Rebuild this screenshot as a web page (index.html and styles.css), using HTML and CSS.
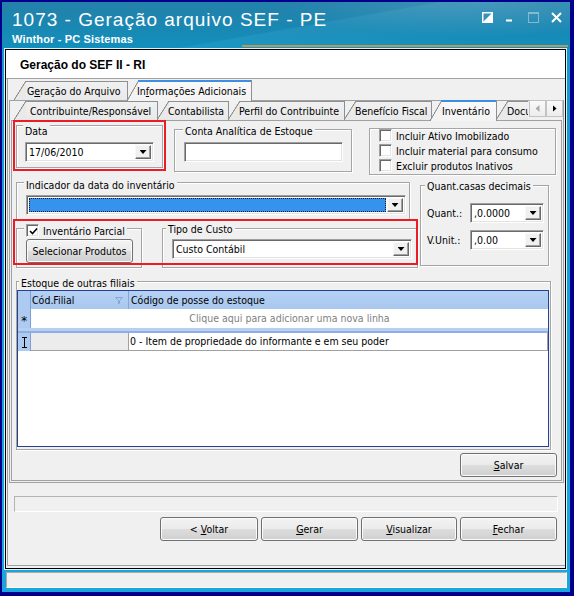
FILE: index.html
```html
<!DOCTYPE html>
<html lang="pt-BR">
<head>
<meta charset="utf-8">
<title>1073 - Geração arquivo SEF - PE</title>
<link rel="stylesheet" href="styles.css">
</head>
<body>
<div class="window">
  <div class="titlebar">
    <div class="title-text">
      <div class="title">1073 - Geração arquivo SEF - PE</div>
      <div class="subtitle">Winthor - PC Sistemas</div>
    </div>
    <div class="caption-btns">
      <svg class="cb" width="11" height="11" viewBox="0 0 11 11"><rect x="0.75" y="0.75" width="9.5" height="9.5" fill="none" stroke="#fff" stroke-width="1.5"/><path d="M10.5 0.5 V10.5 H0.5 Z" fill="#fff"/></svg>
      <svg class="cb" width="11" height="11" viewBox="0 0 11 11"><rect x="1" y="7.5" width="6" height="2" fill="#fff"/></svg>
      <svg class="cb" width="11" height="11" viewBox="0 0 11 11"><rect x="0.5" y="0.5" width="10" height="10" fill="none" stroke="#86b9cf"/><rect x="0" y="0" width="11" height="2" fill="#86b9cf"/></svg>
      <svg class="cb" width="11" height="11" viewBox="0 0 11 11"><path d="M1 1 L10 10 M10 1 L1 10" stroke="#fff" stroke-width="2"/></svg>
    </div>
  </div>

  <div class="client">
    <div class="form-header">Geração do SEF II - RI</div>
    <div class="workarea">
      <div class="frame">
        <div class="tabs tabs-outer">
          <span class="tab o1">G<u>e</u>ração do Arquivo</span>
          <span class="tab active o2">In<u>f</u>ormações Adicionais</span>
        </div>

        <div class="outer-page">
          <div class="tabs tabs-inner">
            <span class="tab i1">Contribuinte/Responsável</span>
            <span class="tab i2">Contabilista</span>
            <span class="tab i3">Perfil do Contribuinte</span>
            <span class="tab i4">Benefício Fiscal</span>
            <span class="tab active i5">Inventário</span>
            <span class="tab clipped i6"><span class="tab-label">Documentos</span></span>
            <span class="arr arr-left"><span class="tri-left"></span></span>
            <span class="arr arr-right"><span class="tri-right"></span></span>
          </div>

          <div class="inner-page">
            <div class="row-a">
              <div class="grp g-data">
                <span class="cap cap-data">Data</span>
                <div class="combo c-data"><span class="val">17/06/2010</span><span class="dd"><i class="tri-down"></i></span></div>
              </div>
              <div class="grp g-conta">
                <span class="cap cap-conta">Conta Analítica de Estoque</span>
                <div class="edit e-conta"></div>
              </div>
              <div class="grp g-checks">
                <label class="chk-row first"><span class="chk"></span><span class="chk-label">Incluir Ativo Imobilizado</span></label>
                <label class="chk-row"><span class="chk"></span><span class="chk-label">Incluir material para consumo</span></label>
                <label class="chk-row"><span class="chk"></span><span class="chk-label">Excluir produtos Inativos</span></label>
              </div>
            </div>

            <div class="row-b">
              <div class="col-left">
                <div class="grp g-ind">
                  <span class="cap cap-ind">Indicador da data do inventário</span>
                  <div class="combo c-ind"><span class="val selected"></span><span class="dd"><i class="tri-down"></i></span></div>
                </div>
                <div class="row-inv">
                  <div class="grp g-inv">
                    <span class="cap cap-inv">
                      <span class="chk checked"><svg width="9" height="9" viewBox="0 0 9 9"><path d="M1 4 L3.5 6.5 L8 1.5" fill="none" stroke="#000" stroke-width="1.6"/></svg></span>
                      <span class="chk-label">Inventário Parcial</span>
                    </span>
                    <button class="btn b-sel" type="button">Selecionar Produtos</button>
                  </div>
                  <div class="grp g-custo">
                    <span class="cap cap-custo">Tipo de Custo</span>
                    <div class="combo c-custo"><span class="val">Custo Contábil</span><span class="dd"><i class="tri-down"></i></span></div>
                  </div>
                </div>
              </div>
              <div class="grp g-quant">
                <span class="cap cap-quant">Quant.casas decimais</span>
                <div class="q-row first"><span class="q-label">Quant.:</span><div class="combo c-q"><span class="val">,0.0000</span><span class="dd"><i class="tri-down"></i></span></div></div>
                <div class="q-row"><span class="q-label">V.Unit.:</span><div class="combo c-q"><span class="val">,0.00</span><span class="dd"><i class="tri-down"></i></span></div></div>
              </div>
            </div>

            <div class="grp g-estoque">
              <span class="cap cap-estoque">Estoque de outras filiais</span>
              <div class="grid">
                <div class="g-head">
                  <div class="ind"></div>
                  <div class="hc c1">Cód.Filial<svg class="funnel" width="8" height="7" viewBox="0 0 8 7"><path d="M0.5 0.5 H7.5 L4.5 3.5 V6.5 H3.5 V3.5 Z" fill="none" stroke="#86a6da"/></svg></div>
                  <div class="hc c2">Código de posse do estoque</div>
                </div>
                <div class="g-new">
                  <div class="ind star">*</div>
                  <div class="newtext">Clique aqui para adicionar uma nova linha</div>
                </div>
                <div class="g-sep"></div>
                <div class="g-row">
                  <div class="ind"><svg width="5" height="11" viewBox="0 0 5 11"><path d="M0 0.5 H5 M2.5 0.5 V10.5 M0 10.5 H5" stroke="#000" fill="none"/></svg></div>
                  <div class="dc c1"></div>
                  <div class="dc c2">0 - Item de propriedade do informante e em seu poder</div>
                </div>
              </div>
            </div>

            <div class="row-save">
              <button class="btn b-wide" type="button"><span><u>S</u>alvar</span></button>
            </div>

            <div class="mark mark-data"></div>
            <div class="mark mark-custo"></div>
          </div>
        </div>

        <div class="progress"></div>

        <div class="actions">
          <button class="btn b-voltar" type="button">&lt; <u>V</u>oltar</button>
          <button class="btn b-gerar" type="button"><u>G</u>erar</button>
          <button class="btn b-vis" type="button"><u>V</u>isualizar</button>
          <button class="btn b-fechar" type="button"><u>F</u>echar</button>
        </div>
      </div>
    </div>
  </div>

  <div class="statusbar"></div>
</div>
</body>
</html>
```

FILE: styles.css
```css
* { box-sizing: border-box; }

html, body { margin: 0; padding: 0; }

body {
  width: 574px;
  height: 596px;
  padding: 2px 4px 4px 2px;
  overflow: hidden;
  background: #00008c;
  color: #000;
  font: 10.5px/12px "DejaVu Sans Condensed", "Liberation Sans", sans-serif;
}

/* ---------- window frame ---------- */
.window {
  width: 568px;
  height: 590px;
  display: flex;
  flex-direction: column;
  background: linear-gradient(180deg, #1596cf 0%, #1aa6dc 100%);
}

.titlebar {
  height: 47px;
  flex: none;
  display: flex;
  justify-content: space-between;
  padding: 6px 0 0 10px;
  color: #fff;
  background:
    linear-gradient(#b9975a, #b9975a) 240px 43px / 326px 2px no-repeat,
    radial-gradient(ellipse 300px 50px at 480px 0px, rgba(255,255,255,.13), rgba(255,255,255,0) 70%),
    linear-gradient(170deg, rgba(255,255,255,0) 52%, rgba(120,220,255,.10) 53%, rgba(255,255,255,0) 85%),
    linear-gradient(180deg, #2481aa 0%, #1a87b2 50%, #1190be 100%);
}

.title {
  font: 19px/24px "Liberation Sans", Arial, sans-serif;
  letter-spacing: 1px;
}

.subtitle {
  margin-top: 1px;
  font: bold 11px/13px "Liberation Sans", Arial, sans-serif;
  letter-spacing: .15px;
}

.caption-btns {
  display: flex;
  align-items: flex-start;
  gap: 12px;
  margin: 4px 8px 0 0;
}

.cb { display: block; }

.client {
  height: 520px;
  flex: none;
  margin: 0 4px 0 3px;
  border: 1px solid #000;
  box-shadow: 0 0 0 1px #dcf1fa;
  background: #f0f0f0;
  display: flex;
  flex-direction: column;
}

.statusbar {
  height: 16px;
  flex: none;
  margin: 3px 3px 0 4px;
  background: #f0f0f0;
  border: 1px solid;
  border-color: #a9a9a9 #fff #fff #a9a9a9;
}

/* ---------- form ---------- */
.form-header {
  height: 29px;
  flex: none;
  background: #fff;
  border-bottom: 1px solid #a0a0a0;
  padding: 2px 0 0 14px;
  font: bold 12px/26px "Liberation Sans", Arial, sans-serif;
}

.workarea {
  flex: 1;
  padding: 0 0 2px 1px;
}

.frame {
  height: 487px;
  border-left: 1px solid #a0a0a0;
  border-bottom: 1px solid #a0a0a0;
  display: flex;
  flex-direction: column;
}

/* ---------- tabs ---------- */
.tabs {
  display: flex;
  align-items: flex-end;
  position: relative;
  z-index: 2;
  flex: none;
}

.tabs-outer { height: 21px; padding-left: 7px; }
.tabs-inner { height: 20px; margin-top: -1px; padding-left: 4px; }

.tab {
  --bg: #e9e9e9;
  --ln: #8e8f90;
  position: relative;
  flex: none;
  height: 19px;
  display: flex;
  align-items: center;
  padding: 1px 0 0 11px;
  margin-left: -1px;
  white-space: nowrap;
  background:
    linear-gradient(var(--ln), var(--ln)) right top / 1px 100% no-repeat,
    linear-gradient(var(--ln), var(--ln)) 11px 0 / calc(100% - 11px) 1px no-repeat,
    linear-gradient(to top left, var(--bg) calc(50% - .7px), var(--ln) calc(50% - .3px), var(--ln) calc(50% + .3px), rgba(0,0,0,0) calc(50% + .7px)) left top / 12px 100% no-repeat,
    linear-gradient(#f1f1f1, var(--bg)) 11px 0 / calc(100% - 11px) 100% no-repeat;
}

.tab.active {
  --bg: #f3f3f3;
  z-index: 3;
  height: 21px;
  margin-bottom: -1px;
  background:
    linear-gradient(var(--ln), var(--ln)) right top / 1px 100% no-repeat,
    linear-gradient(#3d8fe3, #3d8fe3) 11px 0 / calc(100% - 11px) 2px no-repeat,
    linear-gradient(to top left, var(--bg) calc(50% - .7px), var(--ln) calc(50% - .3px), var(--ln) calc(50% + .3px), rgba(0,0,0,0) calc(50% + .7px)) left top / 12px 100% no-repeat,
    linear-gradient(#fafafa, var(--bg)) 11px 0 / calc(100% - 11px) 100% no-repeat;
}

.tab.clipped {
  background:
    linear-gradient(var(--ln), var(--ln)) 11px 0 / calc(100% - 11px) 1px no-repeat,
    linear-gradient(to top left, var(--bg) calc(50% - .7px), var(--ln) calc(50% - .3px), var(--ln) calc(50% + .3px), rgba(0,0,0,0) calc(50% + .7px)) left top / 12px 100% no-repeat,
    linear-gradient(#f1f1f1, var(--bg)) 11px 0 / calc(100% - 11px) 100% no-repeat;
}

.tab-label { display: block; overflow: hidden; width: 100%; }

.o1 { width: 114px; padding-left: 13px; }
.o2 { width: 125px; padding-left: 10px; }

.i1 { width: 144px; padding-left: 16px; margin-left: 0; }
.i2 { width: 72px; }
.i3 { width: 117px; }
.i4 { width: 88px; }
.i5 { width: 67px; margin-left: -2px; padding-left: 12px; }
.i6 { width: 32px; }

.arr {
  align-self: flex-start;
  width: 17px;
  height: 17px;
  border: 1px solid #c3c3c3;
  background: linear-gradient(#fafafa, #ececec);
  display: flex;
  align-items: center;
  justify-content: center;
}

.arr-left { margin-left: 1px; }

.tri-left, .tri-right {
  width: 4px;
  height: 7px;
}

.tri-left { background: #a9a9a9; clip-path: polygon(100% 0, 100% 100%, 0 50%); }
.tri-right { background: #000; clip-path: polygon(0 0, 0 100%, 100% 50%); }

/* ---------- pages ---------- */
.outer-page {
  flex: none;
  margin-left: 1px;
  width: 555px;
  height: 383px;
  border: 1px solid #a0a0a0;
  display: flex;
  flex-direction: column;
}

.inner-page {
  position: relative;
  flex: none;
  margin-left: 1px;
  width: 551px;
  height: 361px;
  border: 1px solid #a0a0a0;
  background: #f0f0f0;
}

/* ---------- group boxes ---------- */
.grp {
  flex: none;
  border: 1px solid #a5a5a5;
  box-shadow: inset 1px 1px 0 #fff, 1px 1px 0 #fff;
}

.cap {
  display: block;
  width: fit-content;
  height: 12px;
  padding: 0 2px;
  background: #f0f0f0;
  white-space: nowrap;
}

.row-a { display: flex; align-items: flex-start; }

.g-data   { width: 147px; height: 43px; margin: 4px 0 0 4px; }
.g-conta  { width: 178px; height: 43px; margin: 8px 0 0 11px; }
.g-checks { width: 187px; height: 47px; margin: 7px 0 0 17px; }

.cap-data  { margin: -1px 0 0 6px; }
.cap-conta { margin: -5px 0 0 8px; }

.c-data { width: 129px; margin: 5px 0 0 8px; }
.e-conta { width: 159px; margin: 5px 0 0 9px; }

.chk-row {
  display: flex;
  align-items: center;
  height: 15px;
}

.chk-row.first { margin-top: -1px; }

.chk-row .chk { margin-left: 9px; }

.chk-label { margin-left: 4px; white-space: nowrap; }

.chk {
  flex: none;
  width: 13px;
  height: 13px;
  border: 1px solid;
  border-color: #a0a0a0 #fff #fff #a0a0a0;
  box-shadow: inset 1px 1px 0 #696969, inset -1px -1px 0 #e3e3e3;
  background: #fff;
  display: flex;
  align-items: center;
  justify-content: center;
}

.chk svg { display: block; margin: 1px 0 0 1px; }

.row-b { display: flex; align-items: flex-start; margin-top: 7px; }

.col-left { width: 403px; margin-left: 4px; }

.g-ind { width: 394px; height: 38px; }
.cap-ind { margin: -4px 0 0 7px; }
.c-ind { width: 380px; height: 19px; margin: 4px 0 0 9px; }

.row-inv { display: flex; gap: 20px; margin-top: 8px; }

.g-inv { width: 126px; height: 40px; }
.cap-inv {
  display: flex;
  align-items: center;
  height: 13px;
  margin: -5px 0 0 7px;
}
.cap-inv .chk-label { margin-left: 4px; }

.b-sel { width: 107px; height: 23px; margin: 2px 0 0 9px; }

.g-custo { width: 256px; height: 40px; }
.cap-custo { margin: -6px 0 0 3px; }
.c-custo { width: 240px; height: 19px; margin: 4px 0 0 9px; }

.g-quant { width: 129px; height: 81px; margin: 3px 0 0 1px; }
.cap-quant { margin: -6px 0 0 4px; }

.q-row { display: flex; align-items: center; margin-top: 7px; }
.q-row.first { margin-top: 11px; }
.q-label { width: 43px; margin-left: 6px; white-space: nowrap; }
.c-q { width: 74px; height: 20px; }

.g-estoque { width: 535px; height: 169px; margin: 13px 0 0 4px; }
.cap-estoque { margin: -5px 0 0 2px; }

/* ---------- inputs ---------- */
.combo, .edit {
  flex: none;
  display: flex;
  height: 20px;
  padding: 2px;
  border: 1px solid;
  border-color: #a0a0a0 #fff #fff #a0a0a0;
  box-shadow: inset 1px 1px 0 #696969, inset -1px -1px 0 #e3e3e3;
  background: #fff;
}

.val {
  flex: 1;
  padding-left: 1px;
  line-height: 15px;
  white-space: nowrap;
  overflow: hidden;
}

.val.selected {
  background: #3592ee;
  outline: 1px dotted #1a1a1a;
  outline-offset: -1px;
  margin-right: 1px;
}

.dd {
  flex: none;
  width: 16px;
  border: 1px solid;
  border-color: #f8f8f8 #696969 #696969 #f8f8f8;
  box-shadow: inset -1px -1px 0 #a0a0a0;
  background: #f0f0f0;
  display: flex;
  align-items: center;
  justify-content: center;
}

.tri-down {
  display: block;
  width: 7px;
  height: 4px;
  background: #000;
  clip-path: polygon(0 0, 100% 0, 50% 100%);
}

/* ---------- buttons ---------- */
.btn {
  flex: none;
  height: 24px;
  padding: 0;
  border: 1px solid #707070;
  border-radius: 3px;
  background: linear-gradient(180deg, #f3f3f3 0%, #ebebeb 48%, #dddddd 52%, #cfcfcf 100%);
  box-shadow: inset 0 0 0 1px #fbfbfb;
  color: #000;
  font: inherit;
  line-height: 12px;
  text-align: center;
  white-space: nowrap;
}

.b-wide { width: 97px; }

.row-save {
  display: flex;
  justify-content: flex-end;
  margin-top: 3px;
  padding-right: 4px;
}

.progress {
  flex: none;
  width: 544px;
  height: 16px;
  margin: 13px 0 0 6px;
  border: 1px solid;
  border-color: #b3b3b3 #fff #fff #b3b3b3;
}

.actions {
  display: flex;
  margin-top: 5px;
  padding-left: 152px;
}

.b-voltar { width: 98px; }
.b-gerar  { width: 97px; margin-left: 3px; }
.b-vis    { width: 96px; margin-left: 3px; }
.b-fechar { width: 97px; margin-left: 3px; }

/* ---------- grid ---------- */
.grid {
  width: 532px;
  height: 157px;
  margin-top: 1px;
  border: 1px solid #25418f;
  background: #fff;
}

.g-head, .g-new, .g-row { display: flex; }

.g-head {
  height: 18px;
  background: linear-gradient(#b5d0f3, #a9c7ef);
}

.ind {
  flex: none;
  width: 13px;
  border-right: 1px solid #7f9fd6;
  background: #adcaf0;
  display: flex;
  align-items: center;
  justify-content: center;
}

.hc {
  display: flex;
  align-items: center;
  white-space: nowrap;
}

.hc.c1 {
  width: 98px;
  padding-left: 1px;
  border-right: 1px solid #86a4d8;
}

.funnel { margin: 0 5px 0 auto; display: block; }

.hc.c2 { flex: 1; padding-left: 2px; }

.g-new { height: 19px; }

.star {
  font: 12px/12px "DejaVu Sans Mono", "Liberation Mono", monospace;
  padding-top: 4px;
}

.newtext {
  flex: 1;
  text-align: center;
  line-height: 19px;
  color: #7f7f7f;
}

.g-sep {
  height: 5px;
  background: linear-gradient(#b7d0f2 0, #b7d0f2 55%, #8eaee4 55%, #8eaee4 100%);
}

.g-row { height: 18px; }

.g-row .ind { padding-top: 1px; }

.dc {
  border-bottom: 1px solid #a0a0a0;
  line-height: 17px;
  white-space: nowrap;
}

.dc.c1 {
  width: 98px;
  background: #ececec;
  border-right: 1px solid #a0a0a0;
}

.dc.c2 {
  flex: 1;
  padding-left: 1px;
  border-right: 1px solid #a0a0a0;
}

/* ---------- highlight marks ---------- */
.mark {
  position: absolute;
  border: 2px solid #ec1c24;
  pointer-events: none;
}

.mark-data  { left: 1px; top: -1px; width: 153px; height: 51px; }
.mark-custo { left: 1px; top: 98px; width: 405px; height: 46px; }
```
